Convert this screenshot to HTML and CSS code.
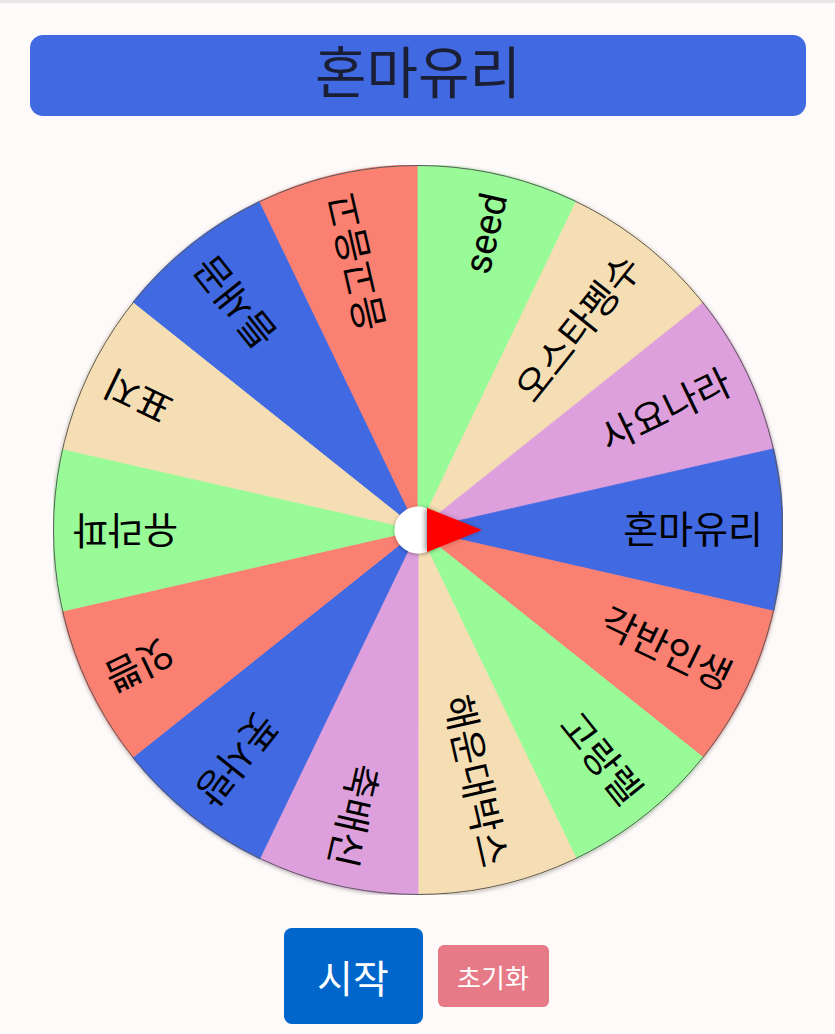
FILE: index.html
```html
<!DOCTYPE html>
<html lang="ko">
<head>
    <meta charset="UTF-8">
    <meta name="viewport" content="width=device-width, initial-scale=1.0">
    <title>룰렛</title>
    <link rel="stylesheet" href="styles.css">
</head>
<body>
    <div class="page">
        <h1 class="result">혼마유리</h1>

        <div class="wheel-box">
            <svg class="wheel" width="730" height="730" viewBox="-365 -365 730 730">
                <defs>
                    <filter id="rimShadow" x="-10%" y="-10%" width="120%" height="120%">
                        <feDropShadow dx="0" dy="1" stdDeviation="2" flood-color="#000" flood-opacity="0.35"/>
                    </filter>
                    <filter id="pinShadow" x="-50%" y="-50%" width="200%" height="200%">
                        <feDropShadow dx="-2" dy="0" stdDeviation="2.5" flood-color="#000" flood-opacity="0.4"/>
                    </filter>
                    <path id="slice" d="M0 0 L355.85 -81.22 A365 365 0 0 1 355.85 81.22 Z"/>
                </defs>

                <circle r="365" fill="#fff" filter="url(#rimShadow)"/>

                <!-- slices: 14 items, 5 colours cycled -->
                <g transform="rotate(231.43)" class="seg seg-blue"><use href="#slice"/><text x="345" text-anchor="end" dominant-baseline="central">틈새곰</text></g>
                <g transform="rotate(257.14)" class="seg seg-salmon"><use href="#slice"/><text x="345" text-anchor="end" dominant-baseline="central">음고음고</text></g>
                <g transform="rotate(282.86)" class="seg seg-green"><use href="#slice"/><text x="345" text-anchor="end" dominant-baseline="central">seed</text></g>
                <g transform="rotate(308.57)" class="seg seg-wheat"><use href="#slice"/><text x="345" text-anchor="end" dominant-baseline="central">오스타펭수</text></g>
                <g transform="rotate(334.29)" class="seg seg-plum"><use href="#slice"/><text x="345" text-anchor="end" dominant-baseline="central">사요나라</text></g>
                <g transform="rotate(0)" class="seg seg-blue"><use href="#slice"/><text x="345" text-anchor="end" dominant-baseline="central">혼마유리</text></g>
                <g transform="rotate(25.71)" class="seg seg-salmon"><use href="#slice"/><text x="345" text-anchor="end" dominant-baseline="central">각반인생</text></g>
                <g transform="rotate(51.43)" class="seg seg-green"><use href="#slice"/><text x="345" text-anchor="end" dominant-baseline="central">고랑렐</text></g>
                <g transform="rotate(77.14)" class="seg seg-wheat"><use href="#slice"/><text x="345" text-anchor="end" dominant-baseline="central">해운대박스</text></g>
                <g transform="rotate(102.86)" class="seg seg-plum"><use href="#slice"/><text x="345" text-anchor="end" dominant-baseline="central">축배신</text></g>
                <g transform="rotate(128.57)" class="seg seg-blue"><use href="#slice"/><text x="345" text-anchor="end" dominant-baseline="central">풋사랑</text></g>
                <g transform="rotate(154.29)" class="seg seg-salmon"><use href="#slice"/><text x="345" text-anchor="end" dominant-baseline="central">잇쁨</text></g>
                <g transform="rotate(180)" class="seg seg-green"><use href="#slice"/><text x="345" text-anchor="end" dominant-baseline="central">유라파</text></g>
                <g transform="rotate(205.71)" class="seg seg-wheat"><use href="#slice"/><text x="345" text-anchor="end" dominant-baseline="central">표지</text></g>

                <circle r="364.5" class="rim"/>

                <!-- pointer -->
                <circle r="23.5" class="hub" filter="url(#rimShadow)"/>
                <polygon points="9,-22 64,0 9,22" class="arrow" filter="url(#pinShadow)"/>
            </svg>
        </div>

        <div class="controls">
            <button class="btn btn-start">시작</button>
            <button class="btn btn-reset">초기화</button>
        </div>
    </div>
</body>
</html>
```

FILE: styles.css
```css
* {
    margin: 0;
    padding: 0;
    box-sizing: border-box;
}

body {
    font-family: Roboto, "Noto Sans CJK KR", sans-serif;
    background: #fffafa;
    border-top: 3px solid #e8e6e6;
    min-height: 100vh;
}

.page {
    padding: 32px 29px 0 30px;
}

.result {
    height: 81px;
    line-height: 79px;
    background: #4169e1;
    border-radius: 13px;
    color: #1b1f36;
    font-size: 56px;
    font-weight: 400;
    text-align: center;
}

.wheel-box {
    margin-top: 49px;
    display: flex;
    justify-content: center;
}

.wheel {
    display: block;
}

.seg text {
    font-family: Roboto, "Noto Sans CJK KR", sans-serif;
    font-size: 38px;
    fill: #000;
}

.seg-blue use { fill: #4169e1; stroke: #4169e1; }
.seg-salmon use { fill: #fa8072; stroke: #fa8072; }
.seg-green use { fill: #98fb98; stroke: #98fb98; }
.seg-wheat use { fill: #f5deb3; stroke: #f5deb3; }
.seg-plum use { fill: #dda0dd; stroke: #dda0dd; }

.seg use {
    stroke-width: 0.8;
}

.rim {
    fill: none;
    stroke: #5a5a5a;
    stroke-width: 1;
}

.hub {
    fill: #ffffff;
}

.arrow {
    fill: #ff0000;
}

.controls {
    margin-top: 33px;
    display: flex;
    justify-content: center;
    align-items: center;
    gap: 15px;
    padding-right: 4px;
}

.btn {
    border: none;
    color: #ffffff;
    font-family: Roboto, "Noto Sans CJK KR", sans-serif;
    cursor: pointer;
}

.btn-start {
    width: 139px;
    height: 96px;
    background: #0066cc;
    border-radius: 8px;
    font-size: 39px;
}

.btn-reset {
    width: 111px;
    height: 62px;
    background: #e67a86;
    border-radius: 6px;
    font-size: 26px;
}
```
